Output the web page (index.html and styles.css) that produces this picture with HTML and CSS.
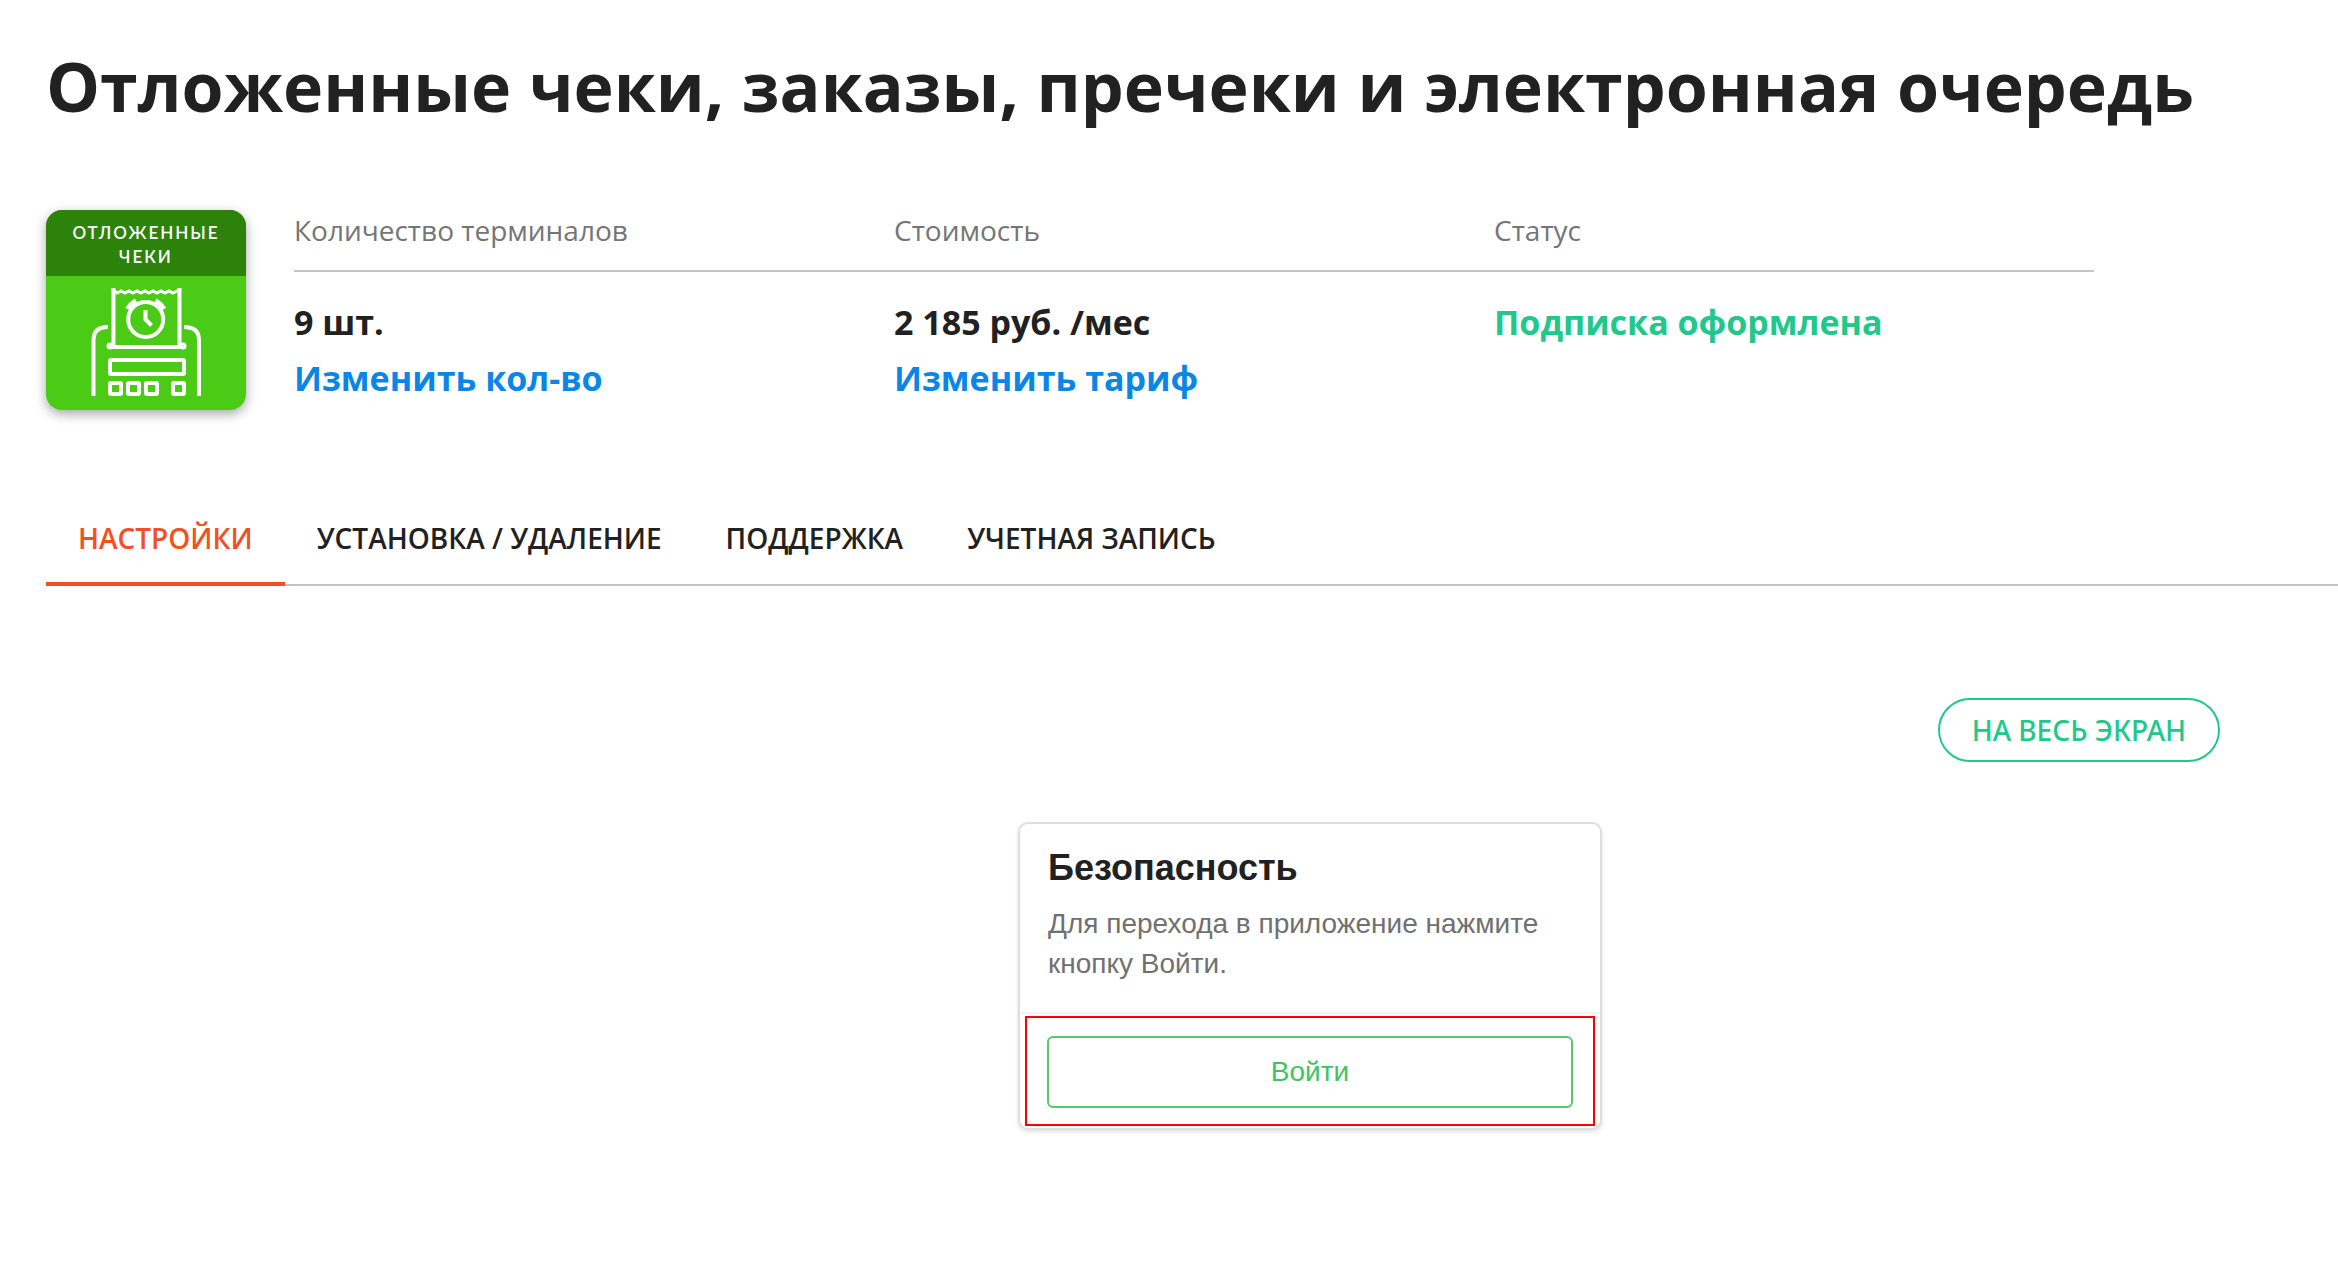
FILE: index.html
```html
<!DOCTYPE html>
<html lang="ru">
  <head>
    <meta charset="utf-8">
    <title>Отложенные чеки</title>
    <link rel="stylesheet" href="styles.css">
  </head>
  <body>
    <h1 class="title">Отложенные чеки, заказы, пречеки и электронная очередь</h1>

    <div class="summary">
      <div class="app-icon">
        <div class="app-name">ОТЛОЖЕННЫЕ<br>ЧЕКИ</div>
        <svg class="app-picture" viewBox="0 0 200 134" fill="none" stroke="#fff" stroke-width="4">
          <!-- receipt -->
          <path d="M66 13l5 4 4-2 4 2 4-2 4 2 4-2 4 2 4-2 4 2 4-2 4 2 4-2 4 2 4-2 4 2 4-2 4-2" stroke-width="3"/>
          <path d="M67.500 12v58M133.500 12v58"/>
          <path d="M64 71h73"/>
          <circle cx="64" cy="70" r="2" stroke-width="3"/>
          <circle cx="137" cy="70" r="2" stroke-width="3"/>
          <!-- alarm clock -->
          <circle cx="99.700" cy="43.500" r="17.500"/>
          <path d="M99.500 34v9.500l6 6"/>
          <path d="M81.500 33q3-5 8.500-8.500M118 33q-3-5-8.500-8.500" stroke-width="5"/>
          <!-- cash register -->
          <path d="M47.500 120V64q0-13 14.500-13M153 120V64q0-13-15-13"/>
          <rect x="64" y="84" width="74" height="14" rx="1"/>
          <rect x="64" y="107" width="11" height="11" rx="1"/>
          <rect x="82" y="107" width="11" height="11" rx="1"/>
          <rect x="100" y="107" width="11" height="11" rx="1"/>
          <rect x="127" y="107" width="11" height="11" rx="1"/>
        </svg>
      </div>

      <table class="info">
        <thead>
          <tr>
            <th>Количество терминалов</th>
            <th>Стоимость</th>
            <th>Статус</th>
          </tr>
        </thead>
        <tbody>
          <tr>
            <td>9 шт.<br><a href="#">Изменить кол-во</a></td>
            <td>2 185 руб. /мес<br><a href="#">Изменить тариф</a></td>
            <td class="active-status">Подписка оформлена</td>
          </tr>
        </tbody>
      </table>
    </div>

    <nav class="tabs">
      <a class="tab tab-active" href="#">НАСТРОЙКИ</a>
      <a class="tab" href="#">УСТАНОВКА / УДАЛЕНИЕ</a>
      <a class="tab" href="#">ПОДДЕРЖКА</a>
      <a class="tab" href="#">УЧЕТНАЯ ЗАПИСЬ</a>
    </nav>

    <div class="content">
      <button class="fullscreen" type="button">НА ВЕСЬ ЭКРАН</button>

      <div class="card">
        <div class="card-text">
          <h2>Безопасность</h2>
          <p>Для перехода в приложение нажмите кнопку Войти.</p>
        </div>
        <div class="card-footer">
          <div class="highlight">
            <button class="login" type="button">Войти</button>
          </div>
        </div>
      </div>
    </div>
  </body>
</html>
```

FILE: styles.css
```css
*{
  box-sizing: border-box;
}
body{
  margin: 0;
  padding: 38px 0 0 46px;
  background-color: #fff;
  color: #212121;
  font-family: "Open Sans", "Noto Sans", sans-serif;
}
.title{
  margin: 0;
  font-size: 68px;
  line-height: 96px;
  font-weight: 700;
  white-space: nowrap;
}
.summary{
  display: flex;
  gap: 48px;
  margin-top: 76px;
  padding-right: 244px;
}
.app-icon{
  flex: none;
  width: 200px;
  height: 200px;
  border-radius: 16px;
  overflow: hidden;
  background-color: #4bcb16;
  box-shadow: 0 4px 12px rgba(0, 0, 0, 0.35);
}
.app-name{
  height: 66px;
  padding-top: 11px;
  background-color: #2d820a;
  color: #fff;
  font-family: Lato, sans-serif;
  font-size: 17px;
  line-height: 24px;
  font-weight: 600;
  letter-spacing: 2px;
  text-align: center;
}
.app-picture{
  display: block;
  width: 100%;
}
.info{
  flex: 1;
  width: 100%;
  table-layout: fixed;
  border-spacing: 0;
}
.info th{
  height: 62px;
  padding: 2px 0 22px;
  border-bottom: 2px solid #c4c4c4;
  color: #757575;
  font-size: 28px;
  line-height: 36px;
  font-weight: 400;
  text-align: left;
}
.info td{
  padding: 22px 0 0;
  font-size: 34px;
  line-height: 56px;
  font-weight: 700;
  vertical-align: top;
}
.info a{
  color: #0a86e6;
  text-decoration: none;
}
.info .active-status{
  color: #22c78b;
}
.tabs{
  display: flex;
  margin-top: 96px;
  border-bottom: 2px solid #c4c4c4;
}
.tab{
  margin-bottom: -2px;
  padding: 12px 32px 24px;
  border-bottom: 4px solid transparent;
  color: #212121;
  font-size: 28px;
  line-height: 40px;
  font-weight: 600;
  text-decoration: none;
}
.tab-active{
  border-color: #f15025;
  color: #f15025;
}
.content{
  display: flex;
  flex-direction: column;
  align-items: center;
  padding: 112px 118px 80px 354px;
}
.fullscreen{
  align-self: flex-end;
  height: 64px;
  padding: 0 32px;
  border: 2px solid #22c78b;
  border-radius: 32px;
  background-color: transparent;
  color: #22c78b;
  font-family: "Noto Sans", sans-serif;
  font-size: 28px;
  font-weight: 500;
}
.card{
  width: 584px;
  margin-top: 60px;
  border: 2px solid #dedede;
  border-radius: 10px;
  box-shadow: 0 2px 4px rgba(0, 0, 0, 0.12);
  font-family: "Liberation Sans", Arial, sans-serif;
}
.card-text{
  padding: 24px 28px 28px;
  border-bottom: 2px solid #f3f3f3;
}
.card h2{
  margin: 0;
  font-size: 36px;
  line-height: 40px;
}
.card p{
  margin: 16px 0 0;
  color: #707070;
  font-size: 28px;
  line-height: 40px;
}
.card-footer{
  padding: 2px 5px;
}
.highlight{
  padding: 18px 20px 16px;
  border: 2px solid #ff0000;
}
.login{
  width: 100%;
  height: 72px;
  border: 2px solid #54c96f;
  border-radius: 6px;
  background-color: transparent;
  color: #3ec45e;
  font-family: "Liberation Sans", Arial, sans-serif;
  font-size: 28px;
}
```
